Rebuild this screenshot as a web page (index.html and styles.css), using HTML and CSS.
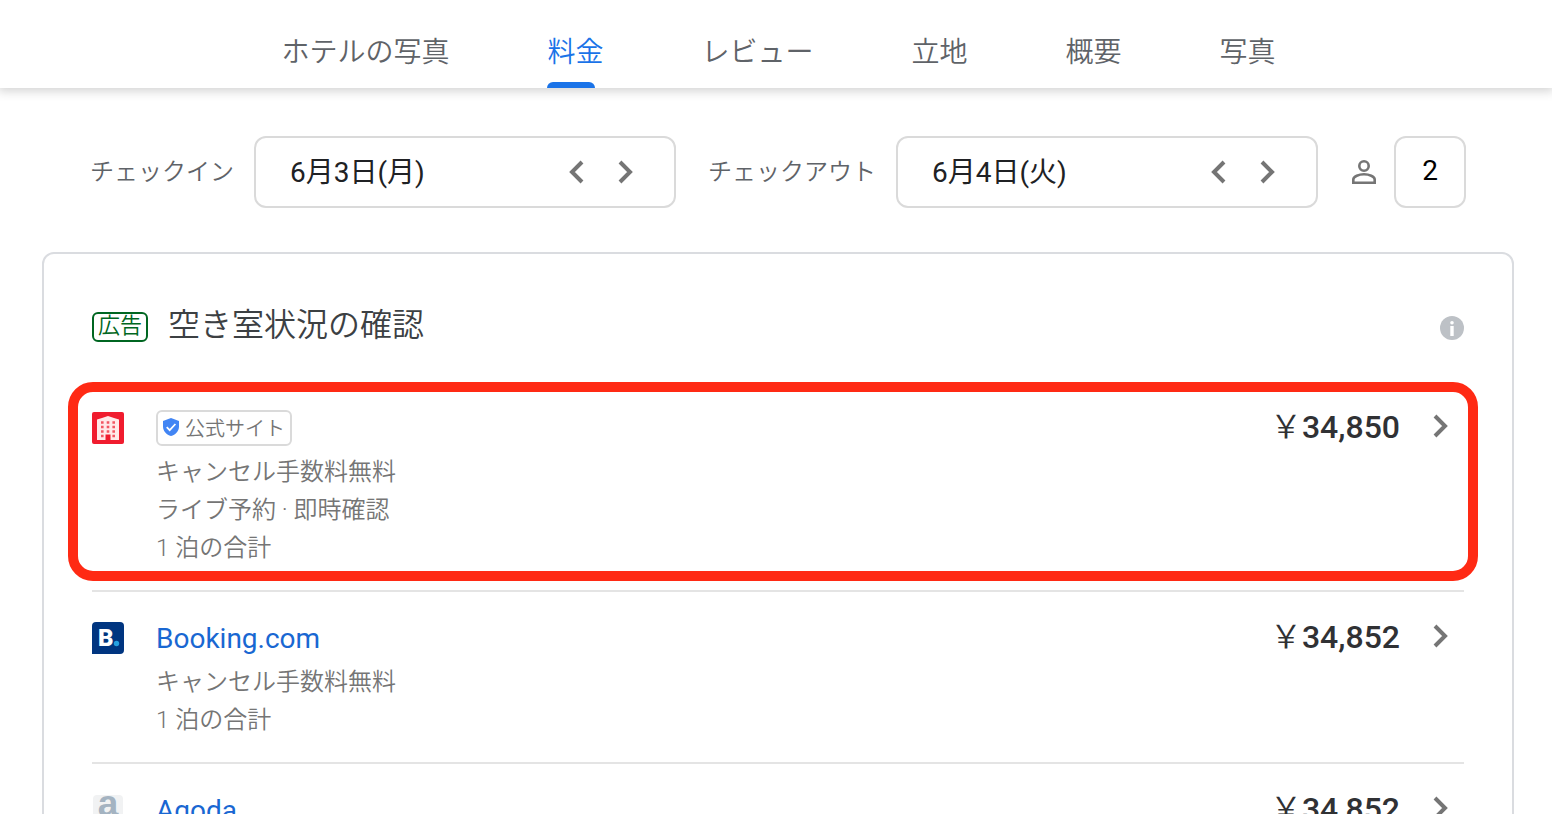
FILE: index.html
```html
<!DOCTYPE html>
<html lang="ja">

<head>
    <meta charset="UTF-8">
    <meta name="viewport" content="width=device-width, initial-scale=1.0">
    <title>料金</title>
    <link rel="stylesheet" href="styles.css">
</head>

<body>
    <nav class="tabs">
        <a href="#" class="tab">ホテルの写真</a>
        <a href="#" class="tab active">料金</a>
        <a href="#" class="tab">レビュー</a>
        <a href="#" class="tab">立地</a>
        <a href="#" class="tab">概要</a>
        <a href="#" class="tab">写真</a>
    </nav>
    <main>
        <form class="search">
            <label class="search-label" for="checkin">チェックイン</label>
            <div class="field">
                <input type="text" id="checkin" class="date" value="6月3日(月)">
                <button type="button" class="arrow" aria-label="前の日">
                    <svg width="16" height="24" viewBox="0 0 16 24"><path d="M14 2L4 12L14 22" /></svg>
                </button>
                <button type="button" class="arrow" aria-label="次の日">
                    <svg width="16" height="24" viewBox="0 0 16 24"><path d="M2 2L12 12L2 22" /></svg>
                </button>
            </div>
            <label class="search-label out" for="checkout">チェックアウト</label>
            <div class="field">
                <input type="text" id="checkout" class="date" value="6月4日(火)">
                <button type="button" class="arrow" aria-label="前の日">
                    <svg width="16" height="24" viewBox="0 0 16 24"><path d="M14 2L4 12L14 22" /></svg>
                </button>
                <button type="button" class="arrow" aria-label="次の日">
                    <svg width="16" height="24" viewBox="0 0 16 24"><path d="M2 2L12 12L2 22" /></svg>
                </button>
            </div>
            <label class="person" for="guests" aria-label="人数">
                <svg width="24" height="24" viewBox="0 0 24 24">
                    <circle cx="12" cy="6" r="4.7" />
                    <path d="M1.3 22.7V19.5C1.3 16.3 7 14.3 12 14.3S22.7 16.3 22.7 19.5V22.7Z" />
                </svg>
            </label>
            <input type="text" id="guests" class="guests" value="2">
        </form>

        <section class="card">
            <div class="card-head">
                <span class="ad">広告</span>
                <h2 class="title">空き室状況の確認</h2>
                <button type="button" class="info" aria-label="情報">
                    <svg width="24" height="24" viewBox="0 0 24 24">
                        <circle cx="12" cy="12" r="12" fill="#bdc1c6" />
                        <circle cx="12" cy="6.8" r="1.8" fill="#fff" />
                        <path d="M12 10V20" stroke="#fff" stroke-width="3.4" />
                    </svg>
                </button>
            </div>

            <div class="offer picked">
                <svg class="logo" width="32" height="32" viewBox="0 0 32 32">
                    <rect width="32" height="32" rx="2" fill="#f01c2e" />
                    <path d="M5 28V7.5L10 6L16 4L22 6L27 7.5V28H18.5V22.5H13.5V28Z" fill="#ffe9e9" />
                    <path d="M9 10.5H23M9 15H23M9 19.5H23" stroke="#f25763" stroke-width="2.6" stroke-dasharray="2.6 3.1" fill="none" />
                    <path d="M9 24H11.6M20.4 24H23" stroke="#f25763" stroke-width="2.6" />
                </svg>
                <div class="details">
                    <div class="name">
                        <span class="official">
                            <svg width="16" height="18" viewBox="0 0 16 18">
                                <path d="M8 0L16 3V8.5C16 13 12.5 16.8 8 18C3.5 16.8 0 13 0 8.5V3Z" fill="#4285f4" />
                                <path d="M3.7 9.2L6.7 12.2L12.4 6" stroke="#fff" stroke-width="1.7" fill="none" />
                            </svg>
                            公式サイト
                        </span>
                    </div>
                    <p>キャンセル手数料無料</p>
                    <p>ライブ予約 · 即時確認</p>
                    <p>1 泊の合計</p>
                </div>
                <div class="price"><span class="yen">￥</span>34,850</div>
                <svg class="go" width="16" height="24" viewBox="0 0 16 24"><path d="M2 2L12 12L2 22" /></svg>
            </div>

            <div class="offer">
                <svg class="logo" width="32" height="32" viewBox="0 0 32 32">
                    <path d="M4 0H28Q32 0 32 4V28Q32 32 28 32H0V4Q0 0 4 0Z" fill="#003580" />
                    <text x="6" y="24" class="logo-b">B</text>
                    <circle cx="24.5" cy="21.5" r="2.7" fill="#26a0e0" />
                </svg>
                <div class="details">
                    <div class="name"><a href="#">Booking.com</a></div>
                    <p>キャンセル手数料無料</p>
                    <p>1 泊の合計</p>
                </div>
                <div class="price"><span class="yen">￥</span>34,852</div>
                <svg class="go" width="16" height="24" viewBox="0 0 16 24"><path d="M2 2L12 12L2 22" /></svg>
            </div>

            <div class="offer">
                <svg class="logo" width="32" height="32" viewBox="0 0 32 32">
                    <rect x="1" y="1" width="30" height="30" rx="4" fill="#f1f2f3" />
                    <text x="16" y="22" class="logo-a">a</text>
                </svg>
                <div class="details">
                    <div class="name"><a href="#">Agoda</a></div>
                </div>
                <div class="price"><span class="yen">￥</span>34,852</div>
                <svg class="go" width="16" height="24" viewBox="0 0 16 24"><path d="M2 2L12 12L2 22" /></svg>
            </div>
        </section>
    </main>
</body>

</html>
```
FILE: styles.css
```css
* {
    box-sizing: border-box;
}

body {
    margin: 0;
    height: 100vh;
    overflow: hidden;
    background-color: #fff;
    font-family: Roboto, "Noto Sans CJK JP", sans-serif;
    font-size: 24px;
    color: #202124;
}

a {
    color: #1967d2;
    text-decoration: none;
}

button {
    display: flex;
    padding: 0;
    border: none;
    background: none;
    cursor: pointer;
}

/* tabs */
.tabs {
    display: flex;
    justify-content: center;
    gap: 98px;
    height: 88px;
    padding-left: 5px;
    box-shadow: 0 1px 10px 2px rgba(0, 0, 0, 0.18);
}

.tab {
    position: relative;
    padding-top: 33px;
    font-size: 28px;
    font-weight: 350;
    line-height: 40px;
    color: #5f6368;
}

.tab.active {
    color: #1a73e8;
}

.tab.active::after {
    content: "";
    position: absolute;
    left: 0;
    bottom: 0;
    width: 48px;
    height: 6px;
    border-radius: 6px 6px 0 0;
    background-color: #1a73e8;
}

main {
    padding: 48px 38px 0 42px;
}

/* dates */
.search {
    display: flex;
    align-items: center;
    padding: 0 48px;
}

.search-label {
    margin-right: 20px;
    padding-bottom: 6px;
    font-weight: 350;
    color: #5f6368;
}

.search-label.out {
    margin-left: 32px;
}

.field {
    display: flex;
    flex: 1;
    align-items: center;
    gap: 34px;
    min-width: 0;
    height: 72px;
    padding: 0 40px 0 34px;
    border: 2px solid #dadada;
    border-radius: 12px;
}

.date {
    flex: 1;
    min-width: 0;
    padding: 0 0 4px;
    border: none;
    outline: none;
    font: inherit;
    font-size: 28px;
    color: #202124;
}

.arrow svg,
.go {
    fill: none;
    stroke: #757575;
    stroke-width: 4;
}

.person {
    display: flex;
    margin: 0 18px 0 34px;
}

.person svg {
    fill: none;
    stroke: #757575;
    stroke-width: 2.6;
}

.guests {
    width: 72px;
    height: 72px;
    padding: 0 0 4px;
    border: 2px solid #dadada;
    border-radius: 12px;
    outline: none;
    font: inherit;
    font-size: 28px;
    text-align: center;
}

/* price list */
.card {
    margin-top: 44px;
    padding: 0 48px;
    border: 2px solid #dadce0;
    border-radius: 12px;
}

.card-head {
    display: flex;
    align-items: center;
    height: 128px;
    padding-top: 18px;
}

.ad {
    height: 30px;
    margin-right: 20px;
    padding: 0 4px;
    border: 2px solid #006621;
    border-radius: 6px;
    font-size: 22px;
    font-weight: 350;
    line-height: 24px;
    color: #006621;
}

.title {
    margin: 0;
    padding-bottom: 4px;
    font-size: 32px;
    font-weight: 350;
    line-height: 40px;
    color: #3c4043;
}

.info {
    margin-left: auto;
    padding-top: 2px;
}

.offer {
    position: relative;
    display: flex;
    padding: 30px 0 23px;
}

.offer + .offer {
    border-top: 2px solid #e4e4e4;
}

.picked::after {
    content: "";
    position: absolute;
    inset: 0 -14px 9px -24px;
    border: 10px solid #ff2a14;
    border-radius: 25px;
    pointer-events: none;
}

.logo {
    margin-right: 32px;
}

.logo-b {
    font: 900 24px Roboto, sans-serif;
    fill: #fff;
}

.logo-a {
    font: 700 37px "Liberation Sans", sans-serif;
    text-anchor: middle;
    fill: #a4b3c1;
}

.details {
    flex: 1;
    font-weight: 350;
    color: #757575;
}

.details p {
    margin: 0;
    line-height: 38px;
}

.name {
    display: flex;
    align-items: center;
    height: 32px;
    margin-bottom: 9px;
    font-size: 28px;
    font-weight: 400;
}

.official {
    display: flex;
    align-items: center;
    gap: 6px;
    height: 36px;
    padding: 0 5px 2px;
    border: 2px solid #dadada;
    border-radius: 6px;
    font-size: 20px;
    font-weight: 350;
}

.price {
    font-size: 32px;
    font-weight: 500;
    line-height: 30px;
    color: #303134;
}

.yen {
    font-weight: 350;
}

.go {
    margin: 2px 15px 0 33px;
}
```
